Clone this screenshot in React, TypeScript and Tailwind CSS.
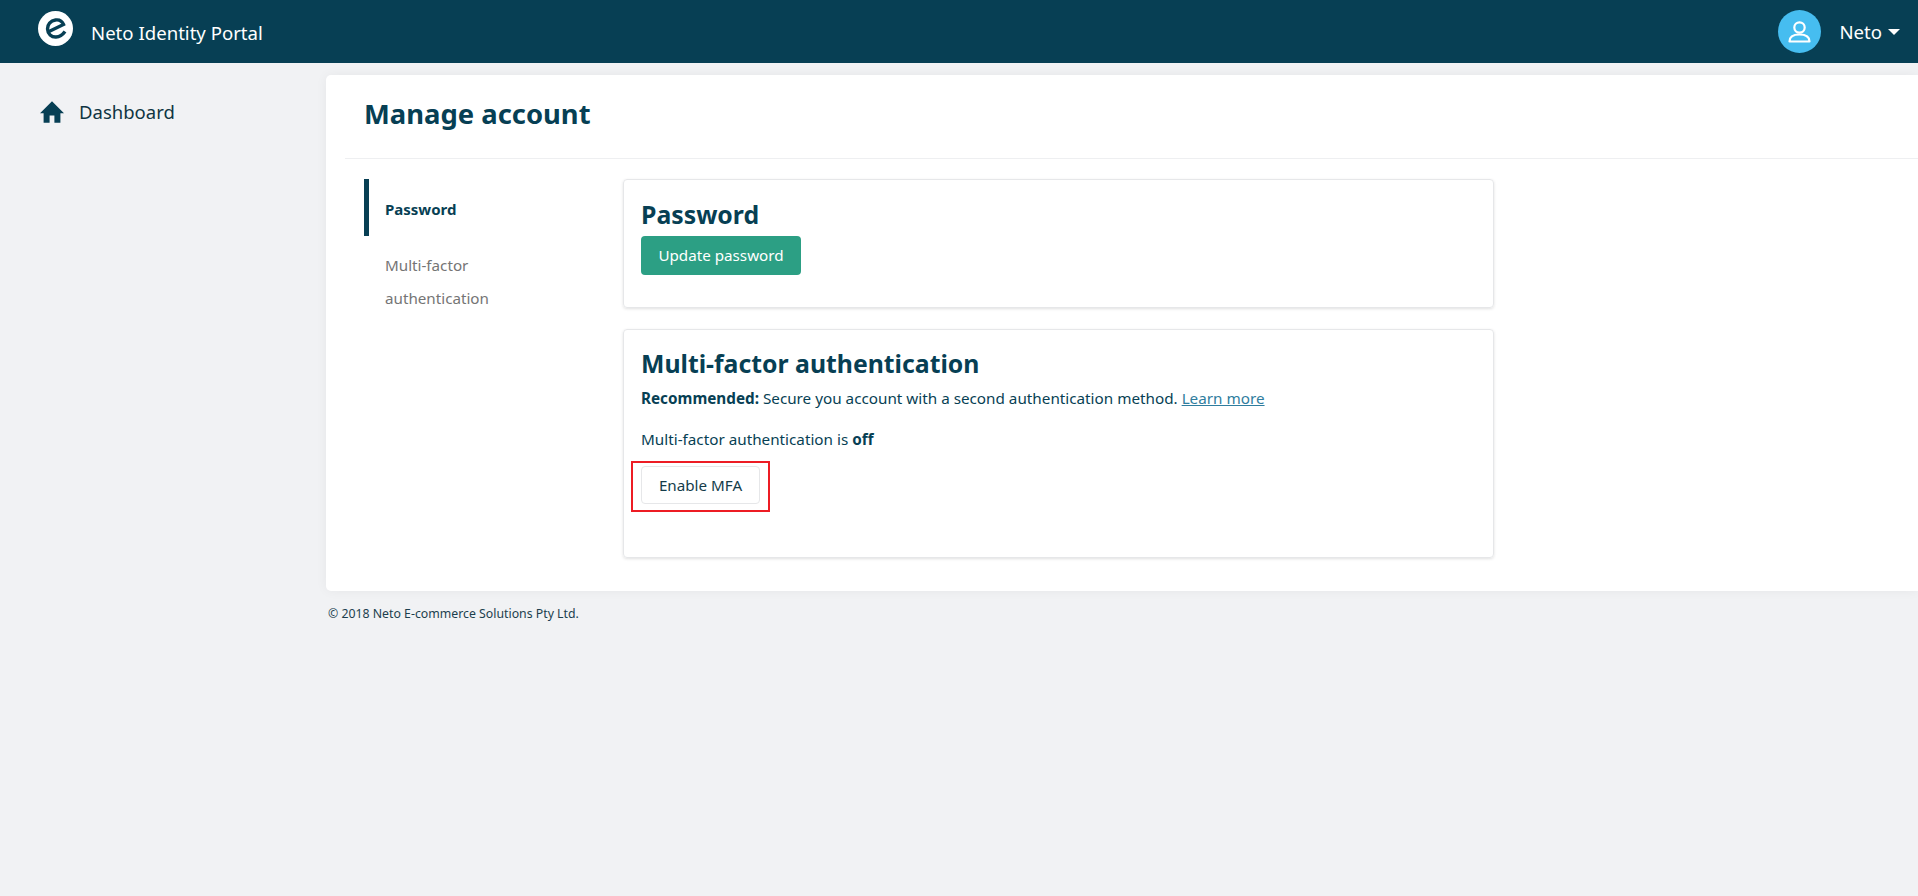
function NetoLogo() {
  return (
    <svg width="35" height="35" viewBox="0 0 35 35" className="shrink-0">
      <circle cx="17.5" cy="17.5" r="17.5" fill="#fff" />
      <path
        d="M11 20.5 L25.5 13.5 C24 9.8 20.5 8.6 17.5 9 C12.5 9.6 9.3 13.5 9.5 18 C9.7 23 13.5 26.2 18 26 C21.5 25.8 24.5 24 27 20.5"
        fill="none"
        stroke="#073f54"
        strokeWidth="3.4"
        strokeLinecap="butt"
      />
    </svg>
  );
}

function HomeIcon() {
  return (
    <svg width="24" height="22" viewBox="2 3 20 18" className="shrink-0">
      <path d="M10 21v-6h4v6h5v-8h3L12 3 2 13h3v8z" fill="#073f54" />
    </svg>
  );
}

function UserAvatar() {
  return (
    <svg width="43" height="43" viewBox="0 0 43 43" className="shrink-0">
      <circle cx="21.5" cy="21.5" r="21.5" fill="#46bdf0" />
      <circle cx="21.5" cy="17.5" r="5.2" fill="none" stroke="#fff" strokeWidth="2.2" />
      <path
        d="M11.5 31.5 C11.5 26.5 16 24.5 21.5 24.5 C27 24.5 31.5 26.5 31.5 31.5 Z"
        fill="none"
        stroke="#fff"
        strokeWidth="2.2"
        strokeLinejoin="round"
      />
    </svg>
  );
}

export default function App() {
  return (
    <div className="min-h-[896px] bg-[#f1f2f4] font-['Noto_Sans',sans-serif] text-[#073f54]">
      <header className="flex h-[63px] items-center justify-between bg-[#073f54] pl-[38px] pr-[18px] text-white">
        <div className="flex items-center">
          <div className="-mt-[6px]">
            <NetoLogo />
          </div>
          <span className="ml-[18px] mt-[3px] text-[18.6px]">Neto Identity Portal</span>
        </div>
        <div className="flex items-center">
          <UserAvatar />
          <span className="ml-[18px] text-[18.6px]">Neto</span>
          <span className="ml-[6px] h-0 w-0 border-x-[6px] border-t-[6px] border-x-transparent border-t-white" />
        </div>
      </header>

      <div className="flex">
        <nav className="w-[326px] shrink-0 pl-[40px] pt-[35px]">
          <a className="flex items-center text-[18.5px] text-[#0f3542]">
            <HomeIcon />
            <span className="ml-[15px]">Dashboard</span>
          </a>
        </nav>

        <main className="min-w-0 flex-1 pt-[12px]">
          <div className="rounded-l-[5px] bg-white pb-[33px] pl-[19px] shadow-[0_0_12px_rgba(0,0,0,0.05)]">
            <div className="flex h-[84px] items-center border-b border-[#eeeff1] pb-[6px] pl-[19px]">
              <h1 className="text-[27.4px] font-bold leading-none">Manage account</h1>
            </div>

            <div className="flex pl-[19px] pt-[20px]">
              <div className="w-[259px] shrink-0">
                <div className="flex h-[57px] items-center border-l-[5px] border-[#073f54] pl-[16px] pt-[3px] text-[15px] font-bold">
                  Password
                </div>
                <div className="mt-[13px] pl-[21px] text-[15.2px] leading-[32.5px] text-[#757575]">
                  Multi-factor
                  <br />
                  authentication
                </div>
              </div>

              <div className="w-[871px]">
                <section className="h-[129px] rounded-[4px] border border-[#e6e7e9] px-[17px] pt-[18px] shadow-[0_1px_3px_rgba(0,0,0,0.12)]">
                  <h2 className="text-[24.8px] font-bold leading-[32px]">Password</h2>
                  <button className="mt-[6px] h-[39px] w-[160px] rounded-[4px] bg-[#2c9f84] text-[15.2px] text-white">
                    Update password
                  </button>
                </section>

                <section className="mt-[21px] h-[229px] rounded-[4px] border border-[#e6e7e9] px-[17px] pt-[17px] shadow-[0_1px_3px_rgba(0,0,0,0.12)]">
                  <h2 className="text-[24.8px] font-bold leading-[32px]">Multi-factor authentication</h2>
                  <p className="mt-[8px] text-[15.25px] leading-[22px]">
                    <strong>Recommended:</strong> Secure you account with a second authentication method.{' '}
                    <a className="text-[#2f7d9e] underline">Learn more</a>
                  </p>
                  <p className="mt-[19px] text-[15.25px] leading-[22px]">
                    Multi-factor authentication is <strong>off</strong>
                  </p>
                  <div className="relative mt-[16px] inline-block">
                    <button className="h-[38px] w-[119px] rounded-[4px] border border-[#e6e7e9] bg-white text-[15.2px] text-[#143c4a]">
                      Enable MFA
                    </button>
                    <div className="absolute -inset-x-[10px] -bottom-[8px] -top-[5px] border-2 border-[#ed1c24]" />
                  </div>
                </section>
              </div>
            </div>
          </div>
          <footer className="mt-[15px] pl-[2px] text-[12.3px] leading-[16px] text-[#1c3f4e]">
            © 2018 Neto E-commerce Solutions Pty Ltd.
          </footer>
        </main>
      </div>
    </div>
  );
}
